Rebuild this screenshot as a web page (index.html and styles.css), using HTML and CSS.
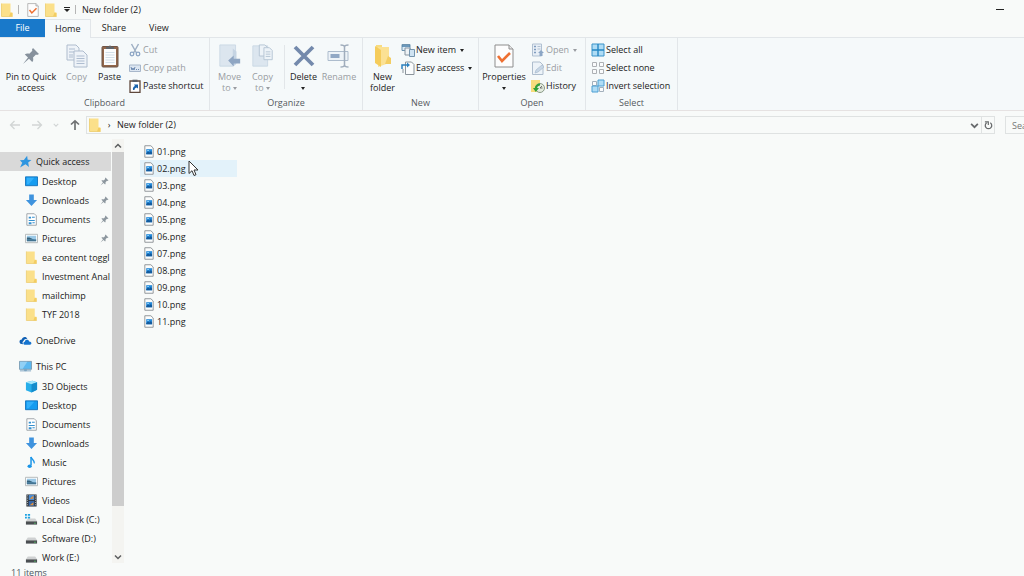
FILE: index.html
```html
<!DOCTYPE html>
<html lang="en">
<head>
<meta charset="utf-8">
<title>New folder (2)</title>
<link rel="stylesheet" href="styles.css">
</head>
<body>
<svg class="sprite" aria-hidden="true">
  <symbol id="folder" viewBox="0 0 12 14"><path d="M0.5 0.5h9v9l2 0v4h-11z" fill="#fbe08a"/><path d="M9.5 9.500l2 .5v3.5h-3.500z" fill="#f3cd62"/><path d="M.5 .5v13h11" fill="none" stroke="#eccb6c" stroke-width=".8"/></symbol>
  <symbol id="check-page" viewBox="0 0 20 24"><path d="M1 1h14l4 4v18H1z" fill="#fdfdfd" stroke="#8d8d8d"/><path d="M15 1v4h4" fill="#e8e8e8" stroke="#8d8d8d"/><path d="M4 12l4 5 8-8" fill="none" stroke="#ee7032" stroke-width="2.600"/></symbol>
  <symbol id="pin" viewBox="0 0 18 18"><path d="M11 1l6 6-2 1-1-.5-3 3c.5 2 .3 3.500-.8 4.500L7 11.800 1 17l5-6.500L2.800 7.500c1.200-1 2.700-1.200 4.500-.700l3-3L10 2.500z" fill="currentColor"/></symbol>
  <symbol id="copy" viewBox="0 0 22 24"><g fill="#eef3f8" stroke="#aebccd"><path d="M1 1h9l3 3v12H1z"/><path d="M8 7h9l4 4v12H8z"/></g><path d="M3 5h6M3 8h5M3 11h4M3 13h4M10.500 12h8M10.500 14.500h8M10.500 17h8M10.500 19.500h8" stroke="#aebdd0"/></symbol>
  <symbol id="paste" viewBox="0 0 18 24"><rect x="1" y="2.500" width="16" height="20.500" rx="1" fill="#92664a" stroke="#6f5547"/><path d="M3 5h12v16H3z" fill="#fbfcfd"/><path d="M5 5V3h2.500a1.500 1.500 0 0 1 3 0H13v2z" fill="#61656a"/><path d="M4.500 8.500h9M4.500 11h9M4.500 13.500h9M4.500 16h9M4.500 18.500h9" stroke="#c8d5e2" stroke-width=".8"/></symbol>
  <symbol id="cut" viewBox="0 0 12 14"><path d="M2.500 1l5 9M9.500 1l-5 9" stroke="#9fb0c4" stroke-width="1.500" fill="none"/><circle cx="3" cy="11" r="1.800" fill="none" stroke="#8da6c5" stroke-width="1.300"/><circle cx="9" cy="11" r="1.800" fill="none" stroke="#8da6c5" stroke-width="1.300"/></symbol>
  <symbol id="path" viewBox="0 0 12 14"><path d="M.5 4h11v6.500H.5z" fill="#dce6f1" stroke="#a7b7cb"/><path d="M2 6l1 3 1-2 1 2 1-3M7 8.500h1M9 8.500h1" stroke="#5f7ea8" fill="none" stroke-width=".9"/></symbol>
  <symbol id="shortcut" viewBox="0 0 12 14"><path d="M1 2h10v11.400H1z" fill="#fff" stroke="#5f493d" stroke-width="1.300"/><path d="M3.500 .7h5v2.300h-5z" fill="#5a5f67"/><path d="M4 11c-.5-2 .5-3.500 2-4L5 5.500h4V9.500L7.500 8.500C6 9 5.500 10 5.500 11z" fill="#1762ac"/></symbol>
  <symbol id="move" viewBox="0 0 24 26"><path d="M1 1h17v21l-3 2H1z" fill="#dce6ef" stroke="#cad8e5"/><path d="M15 5v19l4-3V8z" fill="#c5d4e3"/><path d="M10 18l6-5.500V16h7v5h-7v3.500z" fill="#8fa6c3"/></symbol>
  <symbol id="copyto" viewBox="0 0 24 26"><path d="M1 2h16v22H1z" fill="#dce6ef" stroke="#cad8e5"/><g fill="#edf3f8" stroke="#b4c3d3"><path d="M8 1h6l3 3v9H8z"/><path d="M13 4h6l3 3v10h-9z"/></g><path d="M15 8.500h5M15 11h5M15 13.500h5" stroke="#b4c3d3"/></symbol>
  <symbol id="delete" viewBox="0 0 22 22"><path d="M2 2l18 18M20 2L2 20" stroke="#7389ac" stroke-width="3.800"/></symbol>
  <symbol id="rename" viewBox="0 0 24 24"><path d="M1 7.500h20v9H1z" fill="#edf3f8" stroke="#adbccd"/><path d="M3.500 10h9v4h-9z" fill="#91a8c5"/><path d="M13.500 1c2.500 0 4 .5 4 2v18c0 1.500-1.500 2-4 2M21.500 1c-2.500 0-4 .5-4 2v18c0 1.500 1.500 2 4 2" fill="none" stroke="#a0adbc" stroke-width="1.500"/></symbol>
  <symbol id="bigfolder" viewBox="0 0 18 24"><path d="M2 1h6v13H2z" fill="#f8dc80"/><path d="M4 3h11v16l-11 4z" fill="#fbe193"/><path d="M1 2l6 4v17l-6-4z" fill="#f5cc5b"/><path d="M14 12l3 2v6h-6z" fill="#f3cd62"/></symbol>
  <symbol id="newitem" viewBox="0 0 14 14"><path d="M1 1.500h8v6H1z" fill="#dcecf7" stroke="#6d93ae"/><path d="M1 3h8" stroke="#477ca6" stroke-width="1.500"/><path d="M4 5h5v7H4z" fill="#eef3f6" stroke="#8794a0"/><path d="M8.500 6.500h5v7h-5z" fill="#cfe3f2" stroke="#7594ad"/></symbol>
  <symbol id="easy" viewBox="0 0 14 14"><path d="M4.500 1h6L13 3.500V13.500H4.500z" fill="#fafcfd" stroke="#8b949b"/><path d="M1 8V4h6" stroke="#2b80bf" fill="none" stroke-width="1.500"/><path d="M6 1.500L9 4 6 6.500z" fill="#2b80bf"/><path d="M1 9h2M1 11h2" stroke="#8b949b"/></symbol>
  <symbol id="open" viewBox="0 0 14 14"><path d="M1.500 1h9v12h-9z" fill="#e8eff6" stroke="#b1c1d2"/><path d="M3 3.500h2M3 6.500h2M3 9.500h2" stroke="#7f9cbf" stroke-width="1.500"/><path d="M6.500 3.500h3M6.500 6h3" stroke="#b0c0d2"/><path d="M10 7l3 3-1.500 0V13H8.500v-3H7z" fill="#8ca6c5"/></symbol>
  <symbol id="edit" viewBox="0 0 14 14"><path d="M1.500 1h7.500l3 3v9.500H1.500z" fill="#edf3f8" stroke="#aebdcd"/><path d="M4 12l1-3 6-5 2 2-6 5z" fill="#c8d7e6" stroke="#a7bacf" stroke-width=".7"/></symbol>
  <symbol id="history" viewBox="0 0 14 14"><path d="M0 1h9v12H0z" fill="#f8dc7c"/><circle cx="9" cy="9" r="4.500" fill="#e4ecdf" stroke="#8a9a88"/><path d="M9 4.500A5 5 0 0 0 3.800 9H2l2.800 4L8 9H6a3 3 0 0 1 3-2.500z" fill="#33a138"/><path d="M9 9l2-2M9 9h2.500" stroke="#555" stroke-width=".8"/></symbol>
  <symbol id="all" viewBox="0 0 14 14"><path d="M1 1h12v12H1z" fill="#afdcf5" stroke="#3b93c9"/><path d="M7 1v12M1 7h12" stroke="#2587c4" stroke-width="1.400"/></symbol>
  <symbol id="none" viewBox="0 0 14 14"><path d="M1.500 1.500h4v4h-4zM8.500 1.500h4v4h-4zM1.500 8.500h4v4h-4zM8.500 8.500h4v4h-4z" fill="#fafbfc" stroke="#adb0b4"/></symbol>
  <symbol id="invert" viewBox="0 0 14 14"><path d="M1.500 2.500h4v4h-4zM8.500 8.500h4v4h-4z" fill="#fafbfc" stroke="#a3b0bc"/><path d="M7 1h6v6H7zM1 7h6v6H1z" fill="#afdcf5" stroke="#4c9fd2"/></symbol>
  <symbol id="star" viewBox="0 0 12 12"><path d="M7.500 .8l.5 3.500 3.500.4-3 2.300.7 4L6 8.500 1 11.500l2-4.300L.8 4.800l3.700-.3z" fill="#2f96e0"/></symbol>
  <symbol id="desktop" viewBox="0 0 14 12"><path d="M.5 1h13v9.500H.5z" fill="#169cf0" stroke="#1272bd"/><path d="M2 2h8L4 9H2z" fill="#32b0fb"/></symbol>
  <symbol id="download" viewBox="0 0 14 14"><path d="M4.500 .5h5v6H13L7 13 1 6.500h3.500z" fill="#3f93de"/></symbol>
  <symbol id="document" viewBox="0 0 12 14"><path d="M1 .8h8l2.200 2.200v10.200H1z" fill="#fff" stroke="#9ca2a8"/><path d="M3 4h2.500v2H3zM6.500 4h3v1h-3zM3 7.500h6.500v1H3zM3 10h3v2H3zM7 10h2.500v1H7z" fill="#3691cf"/></symbol>
  <symbol id="picture" viewBox="0 0 14 12"><path d="M.5 1.500h13v9H.5z" fill="#fff" stroke="#b0b5b8"/><path d="M2 3h10v6H2z" fill="#9bc9e7"/><path d="M2 5c4-1 5 2 10 2v2H2z" fill="#34617b"/><path d="M2 7.500h10" stroke="#5c94b9"/></symbol>
  <symbol id="onedrive" viewBox="0 0 14 10"><path d="M1.500 8.500C-.5 6 1 4 3 4 3.500 1 7.500 0 9 3 6.500 3 5 4 5 5.500 3.500 6 3.500 8 4.500 9z" fill="#0f5fb4"/><path d="M6 9.500C4 9 4.500 6.500 6.200 6.300 6.700 3.500 10.500 3.500 11 6c3 .2 3 3.300.8 3.500z" fill="#1674cf"/></symbol>
  <symbol id="pc" viewBox="0 0 14 13"><path d="M.5 1h13v8.500H.5z" fill="#5bb8f0" stroke="#7d9bb0"/><path d="M1 1.500h8L4 9H1z" fill="#91d0f5"/><path d="M6 9.500h2V11H6zM1 11.200h12" fill="#8cadc3" stroke="#7aa3bf"/></symbol>
  <symbol id="cube" viewBox="0 0 14 14"><path d="M1 2.500L8 .8l5 1.700v8L7 13.500 1 11z" fill="#27aeea"/><path d="M1 2.500L8 .8l5 1.700-6 2z" fill="#a6e6fb"/><path d="M7 4.500v9l6-3v-8z" fill="#148ccc"/></symbol>
  <symbol id="music" viewBox="0 0 10 14"><path d="M4.500 1v9" stroke="#1994e7" stroke-width="1.600"/><ellipse cx="3" cy="11" rx="2.300" ry="1.900" fill="#1994e7"/><path d="M4.500 1c.5 3 4 3 3.500 7" fill="none" stroke="#1994e7" stroke-width="1.500"/></symbol>
  <symbol id="video" viewBox="0 0 12 14"><path d="M.5 .5h11v13H.5z" fill="#31363b"/><path d="M3 1h6v5.500H3z" fill="#4b8bd2"/><path d="M3 7.500h6V13H3z" fill="#3565a5"/><path d="M4 5l4-3v3zM4 12l4-3v3z" fill="#e49036"/><path d="M1.600 1.500v11M10.400 1.500v11" stroke="#c8cdd0" stroke-dasharray="1 1.400"/></symbol>
  <symbol id="drive" viewBox="0 0 14 12"><path d="M3 5h8l2 3H1z" fill="#cfd1d2"/><path d="M1 8h12v3.500H1z" fill="#4a4e51"/><path d="M10 10h1.500" stroke="#55d66a"/></symbol>
  <symbol id="windrive" viewBox="0 0 14 12"><path d="M3 5h8l2 3H1z" fill="#cfd1d2"/><path d="M1 8h12v3.500H1z" fill="#4a4e51"/><path d="M10 10h1.500" stroke="#55d66a"/><path d="M0 0h2v2H0zM3 0h2.500v2H3zM0 3h2v2H0zM3 3h2.500v2H3z" fill="#1ba1e2"/></symbol>
  <symbol id="image" viewBox="0 0 10 14"><path d="M.5 .8h6.500L9.500 3.200v10H.5z" fill="#fcfdfd" stroke="#8c9195"/><path d="M2 4.500h6.300V10H2z" fill="#2389da"/><path d="M2 8.500l2-1.500 1.500 1L7 6.500l1.300 1.500v2H2z" fill="#145a9c"/><path d="M3 5.500h2v1H3z" fill="#8accf5"/></symbol>
  <symbol id="left" viewBox="0 0 12 10"><path d="M11 5H1.500M5.500 1l-4 4 4 4" fill="none" stroke="currentColor" stroke-width="1.300"/></symbol>
  <symbol id="right" viewBox="0 0 12 10"><path d="M1 5h9.500M6.500 1l4 4-4 4" fill="none" stroke="currentColor" stroke-width="1.300"/></symbol>
  <symbol id="up" viewBox="0 0 12 12"><path d="M6 11V2M2 5.500L6 1.800l4 3.700" fill="none" stroke="currentColor" stroke-width="1.700"/></symbol>
  <symbol id="chev" viewBox="0 0 8 6"><path d="M1 1.500l3 3 3-3" fill="none" stroke="currentColor" stroke-width="1.500"/></symbol>
  <symbol id="refresh" viewBox="0 0 10 10"><path d="M7 2a3.600 3.600 0 1 1-4 0" fill="none" stroke="currentColor" stroke-width="1.400"/><path d="M1 1h3.800v3.500" fill="none" stroke="currentColor" stroke-width="1.300"/></symbol>
</svg>

<header class="titlebar">
  <svg class="icon-folder"><use href="#folder"/></svg>
  <span class="divider"></span>
  <button class="quick" aria-label="Properties"><svg class="icon-folder"><use href="#check-page"/></svg></button>
  <button class="quick" aria-label="New folder"><svg class="icon-folder"><use href="#folder"/></svg></button>
  <button class="customize" aria-label="Customize toolbar"><span class="caret"></span></button>
  <span class="divider"></span>
  <h1 class="title">New folder (2)</h1>
  <button class="minimize" aria-label="Minimize"></button>
</header>

<nav class="tabs" aria-label="Ribbon tabs">
  <button class="tab file">File</button>
  <button class="tab home">Home</button>
  <button class="tab">Share</button>
  <button class="tab">View</button>
</nav>

<section class="ribbon" aria-label="Home">
  <div class="group">
    <div class="tools">
      <button class="big wide"><svg class="icon-pin"><use href="#pin"/></svg><span>Pin to Quick<br>access</span></button>
      <button class="big slim" disabled><svg><use href="#copy"/></svg><span>Copy</span></button>
      <button class="big slim"><svg><use href="#paste"/></svg><span>Paste</span></button>
      <div class="stack">
        <button class="small" disabled><svg><use href="#cut"/></svg>Cut</button>
        <button class="small" disabled><svg><use href="#path"/></svg>Copy path</button>
        <button class="small"><svg><use href="#shortcut"/></svg>Paste shortcut</button>
      </div>
    </div>
    <h2 class="caption">Clipboard</h2>
  </div>
  <div class="group">
    <div class="tools">
      <button class="big slim first" disabled><svg><use href="#move"/></svg><span>Move<br>to <i class="caret"></i></span></button>
      <button class="big slim" disabled><svg><use href="#copyto"/></svg><span>Copy<br>to <i class="caret"></i></span></button>
      <span class="rule"></span>
      <button class="big slim"><svg class="icon-mid"><use href="#delete"/></svg><span>Delete<br><i class="caret"></i></span></button>
      <button class="big medium" disabled><svg><use href="#rename"/></svg><span>Rename</span></button>
    </div>
    <h2 class="caption">Organize</h2>
  </div>
  <div class="group">
    <div class="tools">
      <button class="big slim first"><svg><use href="#bigfolder"/></svg><span>New<br>folder</span></button>
      <div class="stack">
        <button class="small"><svg><use href="#newitem"/></svg>New item<i class="caret"></i></button>
        <button class="small"><svg><use href="#easy"/></svg>Easy access<i class="caret"></i></button>
      </div>
    </div>
    <h2 class="caption">New</h2>
  </div>
  <div class="group">
    <div class="tools">
      <button class="big props"><svg><use href="#check-page"/></svg><span>Properties<br><i class="caret"></i></span></button>
      <div class="stack">
        <button class="small" disabled><svg><use href="#open"/></svg>Open<i class="caret"></i></button>
        <button class="small" disabled><svg><use href="#edit"/></svg>Edit</button>
        <button class="small"><svg><use href="#history"/></svg>History</button>
      </div>
    </div>
    <h2 class="caption">Open</h2>
  </div>
  <div class="group">
    <div class="tools">
      <div class="stack first">
        <button class="small"><svg><use href="#all"/></svg>Select all</button>
        <button class="small"><svg><use href="#none"/></svg>Select none</button>
        <button class="small"><svg><use href="#invert"/></svg>Invert selection</button>
      </div>
    </div>
    <h2 class="caption">Select</h2>
  </div>
</section>

<div class="location">
  <div class="history">
    <button aria-label="Back" disabled><svg><use href="#left"/></svg></button>
    <button aria-label="Forward" disabled><svg><use href="#right"/></svg></button>
    <button class="recent" aria-label="Recent" disabled><svg><use href="#chev"/></svg></button>
    <button aria-label="Up"><svg><use href="#up"/></svg></button>
  </div>
  <div class="address">
    <svg class="icon-folder"><use href="#folder"/></svg>
    <span class="crumb-arrow">›</span>
    <a class="crumb" href="#">New folder (2)</a>
    <button class="drop" aria-label="Previous locations"><svg><use href="#chev"/></svg></button>
    <button class="refresh" aria-label="Refresh"><svg><use href="#refresh"/></svg></button>
  </div>
  <div class="search"><input type="search" placeholder="Search" aria-label="Search"></div>
</div>

<main class="panes">
  <nav class="tree" aria-label="Folders">
    <ul class="branch">
      <li><a class="node root selected" href="#"><svg><use href="#star"/></svg>Quick access</a></li>
      <li><a class="node" href="#"><svg><use href="#desktop"/></svg>Desktop<svg class="pinned"><use href="#pin"/></svg></a></li>
      <li><a class="node" href="#"><svg><use href="#download"/></svg>Downloads<svg class="pinned"><use href="#pin"/></svg></a></li>
      <li><a class="node" href="#"><svg><use href="#document"/></svg>Documents<svg class="pinned"><use href="#pin"/></svg></a></li>
      <li><a class="node" href="#"><svg><use href="#picture"/></svg>Pictures<svg class="pinned"><use href="#pin"/></svg></a></li>
      <li><a class="node" href="#"><svg><use href="#folder"/></svg>ea content toggl</a></li>
      <li><a class="node" href="#"><svg><use href="#folder"/></svg>Investment Anal</a></li>
      <li><a class="node" href="#"><svg><use href="#folder"/></svg>mailchimp</a></li>
      <li><a class="node" href="#"><svg><use href="#folder"/></svg>TYF 2018</a></li>
    </ul>
    <ul class="branch">
      <li><a class="node root" href="#"><svg><use href="#onedrive"/></svg>OneDrive</a></li>
    </ul>
    <ul class="branch">
      <li><a class="node root" href="#"><svg><use href="#pc"/></svg>This PC</a></li>
      <li><a class="node" href="#"><svg><use href="#cube"/></svg>3D Objects</a></li>
      <li><a class="node" href="#"><svg><use href="#desktop"/></svg>Desktop</a></li>
      <li><a class="node" href="#"><svg><use href="#document"/></svg>Documents</a></li>
      <li><a class="node" href="#"><svg><use href="#download"/></svg>Downloads</a></li>
      <li><a class="node" href="#"><svg><use href="#music"/></svg>Music</a></li>
      <li><a class="node" href="#"><svg><use href="#picture"/></svg>Pictures</a></li>
      <li><a class="node" href="#"><svg><use href="#video"/></svg>Videos</a></li>
      <li><a class="node" href="#"><svg><use href="#windrive"/></svg>Local Disk (C:)</a></li>
      <li><a class="node" href="#"><svg><use href="#drive"/></svg>Software (D:)</a></li>
      <li><a class="node" href="#"><svg><use href="#drive"/></svg>Work (E:)</a></li>
    </ul>
  </nav>
  <div class="scrollbar">
    <button class="scroll-up" aria-label="Scroll up"><svg><use href="#chev"/></svg></button>
    <div class="track"><div class="thumb"></div></div>
    <button aria-label="Scroll down"><svg><use href="#chev"/></svg></button>
  </div>
  <ul class="files">
    <li><a class="item" href="#"><svg><use href="#image"/></svg>01.png</a></li>
    <li><a class="item hovered" href="#"><svg><use href="#image"/></svg>02.png<svg class="cursor" viewBox="0 0 11 17" aria-hidden="true"><path d="M1 1v12.500l3-2.800 2 4.800 2-.8-2-4.700h4z" fill="#fff" stroke="#333"/></svg></a></li>
    <li><a class="item" href="#"><svg><use href="#image"/></svg>03.png</a></li>
    <li><a class="item" href="#"><svg><use href="#image"/></svg>04.png</a></li>
    <li><a class="item" href="#"><svg><use href="#image"/></svg>05.png</a></li>
    <li><a class="item" href="#"><svg><use href="#image"/></svg>06.png</a></li>
    <li><a class="item" href="#"><svg><use href="#image"/></svg>07.png</a></li>
    <li><a class="item" href="#"><svg><use href="#image"/></svg>08.png</a></li>
    <li><a class="item" href="#"><svg><use href="#image"/></svg>09.png</a></li>
    <li><a class="item" href="#"><svg><use href="#image"/></svg>10.png</a></li>
    <li><a class="item" href="#"><svg><use href="#image"/></svg>11.png</a></li>
  </ul>
</main>
<footer class="status">11 items</footer>
</body>
</html>
```

FILE: styles.css
```css
* { box-sizing: border-box; }
body {
  margin: 0;
  height: 100vh;
  overflow: hidden;
  display: flex;
  flex-direction: column;
  background: #f8faf9;
  color: #222;
  font: 9px/12px "Open Sans", "Noto Sans", sans-serif;
}
button {
  margin: 0;
  padding: 0;
  border: 0;
  background: none;
  color: inherit;
  font: inherit;
}
button:disabled { color: #999da2; }
a { color: inherit; text-decoration: none; }
ul { margin: 0; padding: 0; list-style: none; }
h1, h2 { margin: 0; font: inherit; }
svg { display: block; flex: none; }
.sprite { position: absolute; width: 0; height: 0; }
.icon-folder { width: 12px; height: 14px; }
.caret {
  display: inline-block;
  border: 2px solid transparent;
  border-top: 3px solid currentColor;
  border-bottom: 0;
  vertical-align: middle;
}

.titlebar { display: flex; align-items: center; height: 19px; padding: 0 20px 0 1px; flex: none; }
.divider { width: 1px; height: 9px; background: #b5b5b5; margin: 0 8px 0 5px; }
.quick { margin-right: 6px; }
.customize { width: 7px; display: grid; justify-items: center; gap: 1px; }
.customize::before { content: ""; width: 6px; height: 1px; background: #222; }
.customize .caret { border-width: 3px 3px 0; }
.customize + .divider { margin-right: 6px; }
.minimize { width: 8px; height: 1px; background: #222; margin-left: auto; }

.tabs { display: flex; height: 19px; flex: none; border-bottom: 1px solid #e2e6e9; }
.tab { min-width: 45px; padding: 0 10px; }
.file { background: #1979ca; color: #fff; }
.home { background: #f5f9fa; border: 1px solid #e2e6e9; border-width: 1px 1px 0 0; margin-bottom: -1px; }

.ribbon {
  display: grid;
  grid-template-columns: 210px 153px 116px 107px 92px;
  flex: none;
  background: #f5f9fa;
  border-bottom: 1px solid #e6e2e2;
}
.group { border-right: 1px solid #e2e6e9; padding: 3px 0 1px; }
.tools { display: flex; height: 56px; }
.caption { text-align: center; color: #55595e; }
.big { display: flex; flex-direction: column; align-items: center; line-height: 11px; gap: 2px; white-space: nowrap; }
.big svg { width: 24px; height: 24px; margin: 3px 0 1px; }
.big .icon-mid { width: 22px; height: 22px; margin: 4px 0 2px; }
.big .icon-pin { width: 18px; height: 18px; margin: 6px 0 4px; color: #86919c; }
.wide { width: 58px; margin-left: 2px; }
.slim { width: 33px; }
.medium { width: 38px; }
.props { width: 50px; }
.first { margin-left: 3px; }
.rule { width: 1px; height: 44px; margin: 4px 2px 0 5px; background: #e2e6e9; }
.stack { display: flex; flex-direction: column; padding-left: 2px; }
.small { display: flex; align-items: center; gap: 1px; height: 18px; white-space: nowrap; }
.small svg { width: 14px; height: 14px; }
.small .caret { margin-left: 3px; }

.location { display: flex; align-items: center; height: 28px; flex: none; }
.history { display: flex; align-items: center; gap: 10px; padding: 0 5px 0 9px; color: #707274; }
.history svg { width: 12px; height: 12px; }
.history button:disabled { color: #d2d5d5; }
.history .recent svg { width: 6px; }
.address { display: flex; align-items: center; flex: 1; height: 18px; padding-left: 2px; border: 1px solid #dfe2e2; }
.crumb-arrow { width: 16px; text-align: center; }
.crumb { flex: 1; }
.address button { display: grid; place-items: center; width: 13px; height: 100%; color: #66696b; }
.address button svg { width: 9px; height: 9px; }
.address .refresh { border-left: 1px solid #dfe2e2; }
.search { width: 19px; height: 18px; margin-left: 10px; border: 1px solid #dfe2e2; border-right: 0; overflow: hidden; }
.search input { display: block; width: 120px; height: 16px; padding: 0 6px; border: 0; background: none; font: inherit; }
.search input::placeholder { color: #777; }

.panes { display: flex; flex: 1; min-height: 0; }
.tree { width: 111px; padding-top: 13px; overflow: hidden; }
.branch { margin-bottom: 7px; }
.node { display: flex; align-items: center; gap: 4px; height: 19px; padding-left: 25px; white-space: nowrap; }
.node svg { width: 13px; height: 13px; }
.node .pinned { width: 9px; height: 9px; margin: 0 2px 0 auto; color: #8d979f; }
.root { padding-left: 19px; margin-bottom: 1px; }
.selected { background: #d9d9d9; }
.scrollbar { display: flex; flex-direction: column; width: 12px; margin-left: 1px; background: #f4f4f1; color: #5d5f60; }
.scrollbar button { height: 13px; display: grid; place-items: center; }
.scrollbar svg { width: 8px; height: 6px; }
.scroll-up svg { transform: rotate(180deg); }
.track { flex: 1; }
.thumb { height: 89%; background: #cdcdcd; }
.files { flex: 1; padding: 4px 16px; }
.item { position: relative; display: flex; align-items: center; gap: 3px; width: 97px; height: 17px; padding-left: 4px; }
.item svg { width: 10px; height: 13px; }
.hovered { background: #e3f2fa; }
.item .cursor { position: absolute; left: 48px; top: 0; width: 11px; height: 17px; }
.status { flex: none; height: 13px; padding: 4px 0 0 11px; color: #4d5862; white-space: nowrap; }
```
